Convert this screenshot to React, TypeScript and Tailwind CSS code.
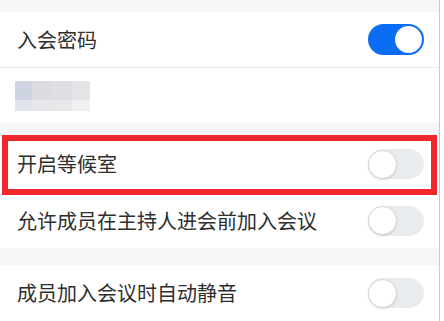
import React from 'react'

const font = { fontFamily: '"Noto Sans CJK SC", "Noto Sans", sans-serif' }

const Toggle = ({ on }: { on?: boolean }) =>
  on ? (
    <div className="flex h-[31px] w-[56px] items-center justify-end rounded-full bg-[#0b6cf4] pr-[2px]">
      <div className="h-[27px] w-[27px] rounded-full bg-white" />
    </div>
  ) : (
    <div className="flex h-[30px] w-[56px] items-center rounded-full bg-[#e9ecef]">
      <div className="h-[29px] w-[29px] rounded-full border border-[#d6d6d6] bg-white shadow-[0_1px_2px_rgba(0,0,0,0.12)]" />
    </div>
  )

const Row = ({ label, on, className = '' }: { label: string; on?: boolean; className?: string }) => (
  <div className={`flex h-[55px] items-center justify-between bg-white pl-[17px] pr-[15px] ${className}`}>
    <span className="text-[20px] leading-none text-[#2e2e2e]">{label}</span>
    <Toggle on={on} />
  </div>
)

export default function App() {
  return (
    <div className="flex h-[321px] w-[444px] overflow-hidden bg-white" style={font}>
      <div className="w-[440px] shrink-0 border-r border-[#c9c9c9] bg-[#f5f6f7]">
        <div className="h-3" />
        <Row label="入会密码" on />
        <div className="h-px bg-[#ececec]" />
        <div className="flex h-[55px] items-center bg-white pl-[15px]">
          <div className="grid h-[30px] w-[75px] grid-cols-[17px_20px_20px_18px] grid-rows-[19px_11px]">
            <div className="bg-[#cfd4e2]" />
            <div className="bg-[#dcdde0]" />
            <div className="bg-[#dddfe2]" />
            <div className="bg-[#e4e5e7]" />
            <div className="bg-[#e2e5ee]" />
            <div className="bg-[#e6e7ea]" />
            <div className="bg-[#e7e8ea]" />
            <div className="bg-[#f0f0f2]" />
          </div>
        </div>
        <div className="h-3" />
        <div className="relative">
          <Row label="开启等候室" className="h-[58px]" />
          <div className="absolute -bottom-[2px] left-[2px] right-[2px] top-0 border-[6px] border-[#f0282d]" />
        </div>
        <Row label="允许成员在主持人进会前加入会议" />
        <div className="h-[17px]" />
        <Row label="成员加入会议时自动静音" className="h-[56px]" />
      </div>
    </div>
  )
}
